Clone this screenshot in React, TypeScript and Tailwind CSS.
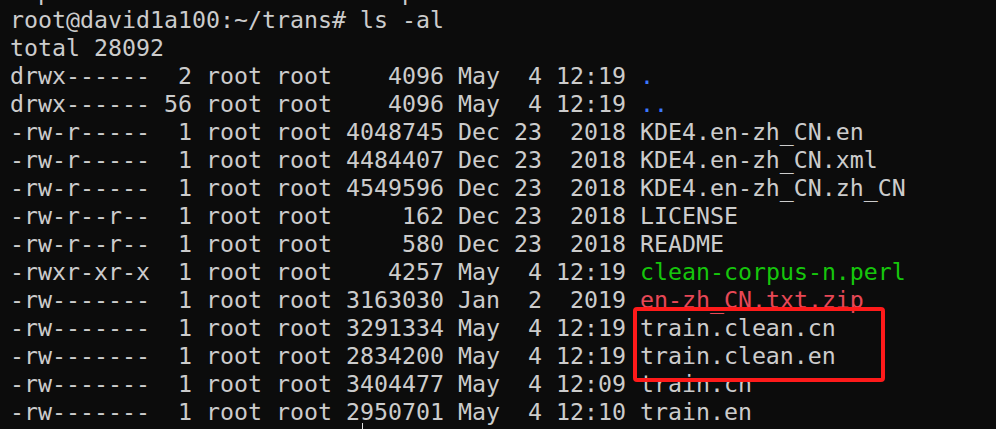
import React from "react";

type Seg = { t: string; c?: string };

const G = "text-[#cccccc]";

const rows: Seg[][] = [
  [{ t: "root@david1a100:~/trans# ls -al" }],
  [{ t: "total 28092" }],
  [{ t: "drwx------  2 root root    4096 May  4 12:19 " }, { t: ".", c: "text-[#3b78ff]" }],
  [{ t: "drwx------ 56 root root    4096 May  4 12:19 " }, { t: "..", c: "text-[#3b78ff]" }],
  [{ t: "-rw-r-----  1 root root 4048745 Dec 23  2018 KDE4.en-zh_CN.en" }],
  [{ t: "-rw-r-----  1 root root 4484407 Dec 23  2018 KDE4.en-zh_CN.xml" }],
  [{ t: "-rw-r-----  1 root root 4549596 Dec 23  2018 KDE4.en-zh_CN.zh_CN" }],
  [{ t: "-rw-r--r--  1 root root     162 Dec 23  2018 LICENSE" }],
  [{ t: "-rw-r--r--  1 root root     580 Dec 23  2018 README" }],
  [{ t: "-rwxr-xr-x  1 root root    4257 May  4 12:19 " }, { t: "clean-corpus-n.perl", c: "text-[#16c60c]" }],
  [{ t: "-rw-------  1 root root 3163030 Jan  2  2019 " }, { t: "en-zh_CN.txt.zip", c: "text-[#e74856]" }],
  [{ t: "-rw-------  1 root root 3291334 May  4 12:19 train.clean.cn" }],
  [{ t: "-rw-------  1 root root 2834200 May  4 12:19 train.clean.en" }],
  [{ t: "-rw-------  1 root root 3404477 May  4 12:09 train.cn" }],
  [{ t: "-rw-------  1 root root 2950701 May  4 12:10 train.en" }],
];

export default function App() {
  return (
    <div className="relative w-[996px] h-[429px] overflow-hidden bg-[#0c0c0c]">
      <div
        className={`flex flex-col pl-[10px] pt-[6px] ${G} text-[23.25px] leading-[28px] whitespace-pre`}
        style={{ fontFamily: '"DejaVu Sans Mono", "Liberation Mono", monospace' }}
      >
        <div className="-mt-[28px]" aria-hidden="true">{"  p                         p"}</div>
        {rows.map((r, i) => (
          <div key={i}>
            {r.map((s, j) => (
              <span key={j} className={s.c}>
                {s.t}
              </span>
            ))}
          </div>
        ))}
      </div>
      <div className="absolute left-[633px] top-[307px] w-[252px] h-[75px] border-[4px] border-[#ff1a1a] rounded-[4px]" />
      <div className="absolute left-[362px] top-[423px] w-[1px] h-[6px] bg-[#e0e0e0]" />
    </div>
  );
}
